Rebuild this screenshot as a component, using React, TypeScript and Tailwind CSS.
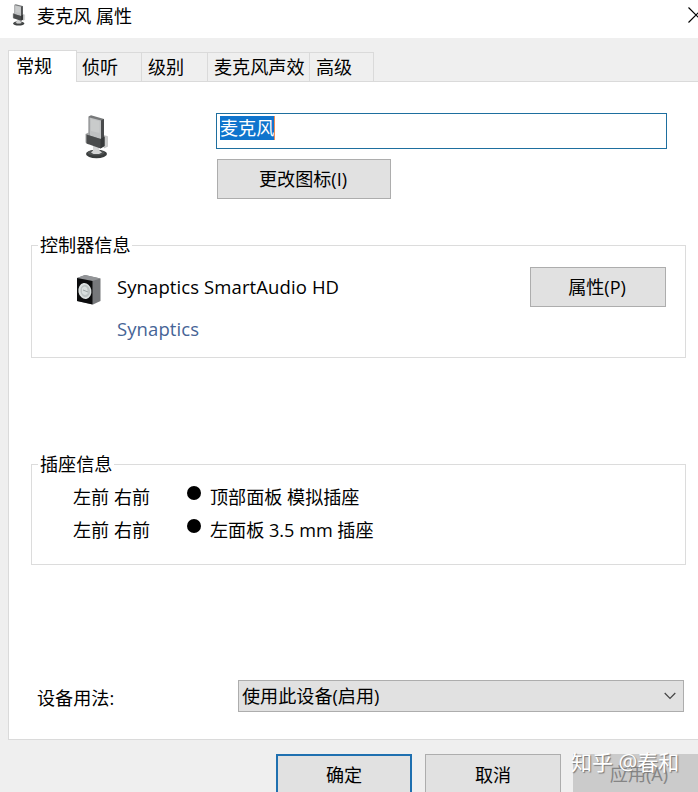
import { type ReactNode, useState } from "react";

type Tab = {
  label: string;
  width: string;
};

type Jack = {
  channels: string;
  location: string;
};

const tabs: Tab[] = [
  { label: "常规", width: "w-[69px] pl-[7px]" },
  { label: "侦听", width: "w-[65px] pl-[5px]" },
  { label: "级别", width: "w-[66px] pl-[6px]" },
  { label: "麦克风声效", width: "w-[102px] pl-[6px]" },
  { label: "高级", width: "w-16 pl-[6px]" },
];

const jacks: Jack[] = [
  { channels: "左前 右前", location: "顶部面板 模拟插座" },
  { channels: "左前 右前", location: "左面板 3.5 mm 插座" },
];

function MicrophoneIcon({ className }: { className: string }) {
  return (
    <svg viewBox="0 0 26 44" preserveAspectRatio="none" className={className} aria-hidden="true">
      <ellipse cx="12.500" cy="39" rx="10.500" ry="4.200" fill="#3a3d3d" />
      <ellipse cx="12" cy="37.800" rx="8.500" ry="2.800" fill="#505353" />
      <path d="M9 31h6v4l3 2.500-3 1.500H9.500L7 37.500l2-2z" fill="#d3d4d4" />
      <path d="M20 20.500l3.500 1v10L20 33z" fill="#cbcccc" stroke="#b0b0b0" strokeWidth=".5" />
      <path d="M1.500 19l3-1.500v12l-3-2z" fill="#a2a4a4" />
      <path d="M4.500 1.500L7 .3 20 4v20l-3 2-12.500-4z" fill="#77797a" />
      <path d="M5.500 2.500L17 5.500V24L5.500 20.500z" fill="#bfc1c2" />
      <path d="M7 4l8.500 2.200V18L7 16z" fill="#c9cbcb" />
      <path d="M17 5.500L20 4v20l-3 1.500z" fill="#494b4c" />
      <path d="M2.500 19.500L16.500 24l4-2.500v9.500l-4 2.500-14-5z" fill="#4a4c4d" />
      <path d="M16.500 24l4-2.500V31l-4 2.500z" fill="#363839" />
    </svg>
  );
}

function SpeakerIcon() {
  return (
    <svg viewBox="0 0 26 30" className="h-[30px] w-[26px]" aria-hidden="true">
      <path d="M1 3l8-3 15.500 3.500V26L17 29.500 1 26z" fill="#76787b" />
      <path d="M1 3l8-3 15.500 3.500L16.500 6z" fill="#929497" />
      <path d="M1 3l15.500 3v23.500L1 26z" fill="#0c0d0e" />
      <ellipse cx="8.900" cy="16" rx="6.500" ry="8" transform="rotate(-10 8.900 16)" fill="#dce1e1" />
      <ellipse cx="9.200" cy="16" rx="4.800" ry="6.200" transform="rotate(-10 9.200 16)" fill="#bcc3c3" />
      <path d="M6 13q3-3 5 0l1 5q-3 4-6 0z" fill="#d9dfdf" />
      <path d="M7 15l5 2" stroke="#9aa3a3" />
    </svg>
  );
}

function GroupBox({ title, className, children }: { title: string; className: string; children: ReactNode }) {
  return (
    <fieldset className={`border border-[#dcdcdc] pl-1.5 ${className}`}>
      <legend className="px-0.5 leading-6">{title}</legend>
      {children}
    </fieldset>
  );
}

export default function App() {
  const [activeTab, setActiveTab] = useState("常规");

  return (
    <div className="relative flex h-[792px] w-[698px] flex-col overflow-hidden bg-[#efefef] font-['Open_Sans','Noto_Sans_CJK_SC',sans-serif] text-[18.1px] leading-6 font-[375] text-black">
      <header className="flex h-[38px] shrink-0 items-start bg-white pl-3">
        <MicrophoneIcon className="mt-1 h-[22px] w-[14px]" />
        <h1 className="mt-1 ml-[11px] flex-1">麦克风 属性</h1>
        <button type="button" aria-label="关闭" className="-mr-1.5 mt-[7px]">
          <svg viewBox="0 0 16 16" className="h-4 w-4" fill="none" stroke="black" strokeWidth="1.2">
            <path d="M.5 .5l15 15M15.500 .5l-15 15" />
          </svg>
        </button>
      </header>

      <nav role="tablist" className="z-10 mt-3 ml-2 flex h-8 shrink-0 items-end">
        {tabs.map((tab) => {
          const active = tab.label === activeTab;
          return (
            <button
              key={tab.label}
              type="button"
              role="tab"
              aria-selected={active}
              onClick={() => setActiveTab(tab.label)}
              className={`shrink-0 border-[#dadada] text-left whitespace-nowrap ${tab.width} ${
                active ? "h-8 border-x border-t bg-white pb-px" : "mb-px h-[29px] border-t border-r"
              }`}
            >
              {tab.label}
            </button>
          );
        })}
      </nav>

      <main className="-mt-px ml-2 flex h-[659px] shrink-0 flex-col border-y border-l border-[#dadada] bg-white pr-3 pl-[22px]">
        <section className="flex pt-[31px]">
          <MicrophoneIcon className="mt-0.5 ml-[53px] h-11 w-[26px]" />
          <div className="ml-[106px] flex flex-col items-start gap-2.5">
            <div className="h-9 w-[451px] border border-[#1e6f9f] px-[3px] pt-[2px]">
              <span className="block h-6 w-[55px] border-r border-[#ed8a55] bg-[#0f74cd] whitespace-nowrap text-white">
                麦克风
              </span>
            </div>
            <button type="button" className="ml-px h-10 w-[174px] border border-[#adadad] bg-[#e1e1e1] pr-0.5">
              更改图标(I)
            </button>
          </div>
        </section>

        <GroupBox title="控制器信息" className="mt-[34px] h-[125px]">
          <div className="flex pt-2.5 pl-[38px]">
            <div className="mt-2">
              <SpeakerIcon />
            </div>
            <div className="mt-2 ml-[15px] flex-1 text-[18.5px] font-normal tracking-[0.1px]">
              <p>Synaptics SmartAudio HD</p>
              <p className="mt-[18px] text-[#466496]">Synaptics</p>
            </div>
            <button type="button" className="mr-[19px] h-10 w-[136px] border border-[#adadad] bg-[#e1e1e1] pr-0.5">
              属性(P)
            </button>
          </div>
        </GroupBox>

        <GroupBox title="插座信息" className="mt-[94px] h-[113px]">
          <ul className="flex flex-col gap-[9px] pt-[9px] pl-[35px]">
            {jacks.map((jack) => (
              <li key={jack.location} className="flex">
                <span className="w-[114px]">{jack.channels}</span>
                <span className="mt-px mr-[9px] h-3.5 w-3.5 rounded-full bg-black" />
                <span>{jack.location}</span>
              </li>
            ))}
          </ul>
        </GroupBox>

        <section className="mt-[115px] flex pl-1.5">
          <span className="mt-1.5 w-[201px]">设备用法:</span>
          <button
            type="button"
            aria-haspopup="listbox"
            className="flex h-8 w-[446px] items-center justify-between border border-[#adadad] bg-[#e1e1e1] pr-[7px] pl-[3px]"
          >
            使用此设备(启用)
            <svg viewBox="0 0 12 8" className="h-2 w-3" fill="none" stroke="#444" strokeWidth="1.2">
              <path d="M.7 1L6 6.500 11.300 1" />
            </svg>
          </button>
        </section>
      </main>

      <footer className="flex shrink-0 pt-3.5 pl-[276px]">
        <button type="button" className="mr-[13px] h-[39px] w-[136px] shrink-0 border-x-2 border-t-2 border-[#1f70b0] bg-[#e1e1e1]">
          确定
        </button>
        <button type="button" className="mr-3 h-10 w-[136px] shrink-0 border-x border-t border-[#adadad] bg-[#e1e1e1]">
          取消
        </button>
        <button type="button" disabled className="h-10 w-[136px] shrink-0 bg-[#cbcbcb] pr-1 text-[#858585]">
          应用(A)
        </button>
      </footer>

      <p className="absolute top-[750px] left-[571px] text-[21px] font-normal whitespace-nowrap text-white [text-shadow:1px_1px_1px_#777]">
        知乎 @春和
      </p>
    </div>
  );
}
